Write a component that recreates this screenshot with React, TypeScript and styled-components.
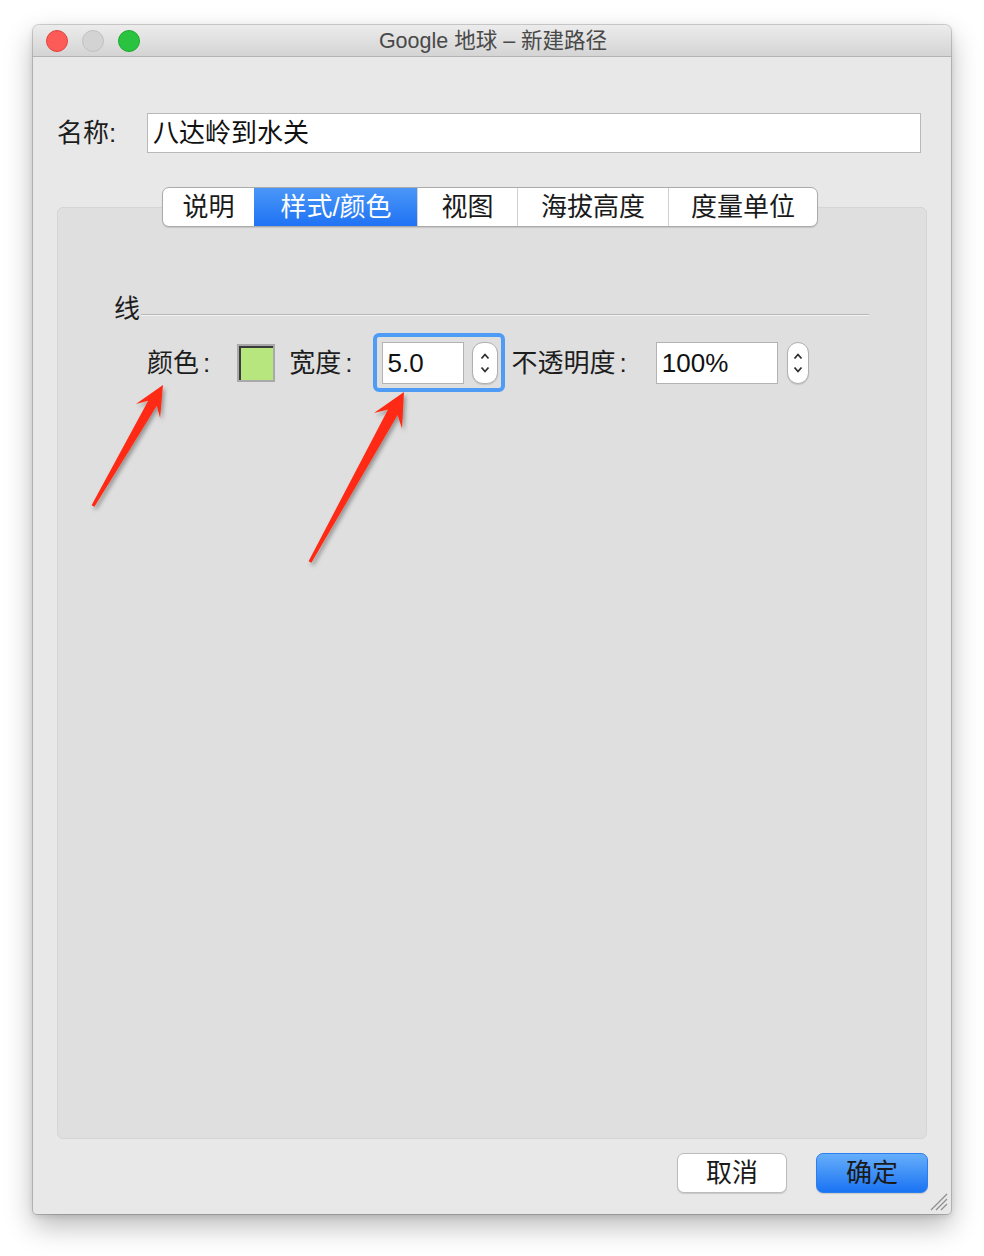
import React from "react";
import styled, { createGlobalStyle } from "styled-components";

const Global = createGlobalStyle`
  html, body { margin: 0; padding: 0; background: #ffffff; }
  body { font-family: "Liberation Sans", "Noto Sans CJK SC", sans-serif; color: #1d1d1d; }
  * { box-sizing: border-box; }
`;

const Page = styled.div`
  position: relative;
  width: 984px;
  height: 1256px;
  padding: 25px 0 0 33px;
`;

const Window = styled.div`
  position: relative;
  width: 918px;
  height: 1189px;
  display: flex;
  flex-direction: column;
  background: #e8e8e8;
  border-radius: 6px 6px 4px 4px;
  box-shadow: 0 0 0 1px rgba(0, 0, 0, 0.16), 0 12px 28px rgba(0, 0, 0, 0.28),
    0 2px 6px rgba(0, 0, 0, 0.12);
`;

const TitleBar = styled.div`
  height: 32px;
  flex: none;
  display: grid;
  grid-template-columns: 1fr auto 1fr;
  align-items: center;
  padding: 0 13px;
  background: linear-gradient(#ececec, #d4d4d4);
  border-bottom: 1px solid #b3b3b3;
  border-radius: 6px 6px 0 0;
`;

const Lights = styled.div`
  display: flex;
  gap: 14px;
  align-items: center;
`;

const Light = styled.span<{ $fill: string; $edge: string }>`
  width: 22px;
  height: 22px;
  border-radius: 50%;
  background: ${(p) => p.$fill};
  border: 1px solid ${(p) => p.$edge};
`;

const Title = styled.div`
  font-size: 21.5px;
  line-height: 26px;
  color: #494949;
  white-space: nowrap;
  margin-left: 2px;
`;

const Body = styled.div`
  flex: 1;
  display: flex;
  flex-direction: column;
  padding: 56px 24px 21px 24px;
`;

const NameRow = styled.div`
  display: flex;
  align-items: center;
  margin-right: 6px;
`;

const NameLabel = styled.div`
  width: 90px;
  font-size: 26px;
  line-height: 30px;
`;

const NameInput = styled.div`
  flex: 1;
  height: 40px;
  background: #ffffff;
  border: 1px solid #b9b9b9;
  display: flex;
  align-items: center;
  padding-left: 5px;
  font-size: 26px;
  line-height: 30px;
  color: #111;
`;

const TabsRow = styled.div`
  position: relative;
  z-index: 1;
  margin-top: 34px;
  height: 40px;
  display: flex;
  justify-content: center;
`;

const TabGroup = styled.div`
  display: flex;
  height: 40px;
  border: 1px solid #aaaaaa;
  border-radius: 7px;
  background: #ffffff;
  overflow: hidden;
  box-shadow: 0 1px 1px rgba(0, 0, 0, 0.12);
  margin-right: 4px;
`;

const Tab = styled.div<{ $w: number; $active?: boolean }>`
  width: ${(p) => p.$w}px;
  display: flex;
  align-items: center;
  justify-content: center;
  font-size: 26px;
  line-height: 30px;
  color: ${(p) => (p.$active ? "#ffffff" : "#1a1a1a")};
  background: ${(p) =>
    p.$active ? "linear-gradient(#4a97f8, #1f72f4)" : "transparent"};
  border-left: 1px solid ${(p) => (p.$active ? "transparent" : "#d2d2d2")};
  &:first-child {
    border-left: none;
  }
`;

const Panel = styled.div`
  position: relative;
  margin-top: -20px;
  height: 932px;
  flex: none;
  background: #dfdfdf;
  border: 1px solid #d5d5d5;
  border-radius: 6px;
  padding: 86px 57px 0 56px;
`;

const GroupHeader = styled.div`
  display: flex;
  align-items: flex-end;
  gap: 1px;
  height: 30px;
`;

const GroupTitle = styled.div`
  font-size: 26px;
  line-height: 30px;
`;

const GroupRule = styled.div`
  flex: 1;
  height: 2px;
  margin-bottom: 8px;
  border-top: 1px solid #b6b6b6;
  border-bottom: 1px solid #f4f4f4;
`;

const FieldRow = styled.div`
  display: flex;
  align-items: center;
  margin-top: 9px;
  padding-left: 33px;
  height: 59px;
`;

const Label = styled.div<{ $gap: number }>`
  font-size: 26px;
  line-height: 30px;
  margin-right: ${(p) => p.$gap}px;
  white-space: nowrap;
`;

const Colon = styled.span`
  margin-left: 4px;
`;

const Swatch = styled.div`
  width: 38px;
  height: 38px;
  border: 2px solid #a9a9a9;
  background: #b7e67f;
  margin-right: 14px;
`;

const SwatchInner = styled.div`
  width: 100%;
  height: 100%;
  border-top: 2px solid #3b3b3b;
  border-left: 2px solid #3b3b3b;
  background: #b7e67f;
`;

const FocusRing = styled.div`
  display: flex;
  align-items: center;
  gap: 8px;
  height: 59px;
  width: 132px;
  padding: 0 3px 0 5px;
  border: 4px solid #4f9cf7;
  border-radius: 6px;
  background: #dfdfdf;
  margin-right: 7px;
`;

const NumberBox = styled.div<{ $w: number }>`
  width: ${(p) => p.$w}px;
  height: 42px;
  background: #ffffff;
  border: 1px solid #b3b3b3;
  display: flex;
  align-items: center;
  padding-left: 5px;
  font-size: 26px;
  line-height: 30px;
  color: #111;
`;

const StepperBox = styled.div<{ $w: number }>`
  width: ${(p) => p.$w}px;
  height: 42px;
  background: #ffffff;
  border: 1px solid #b0b0b0;
  border-radius: 11px;
  box-shadow: 0 1px 1px rgba(0, 0, 0, 0.12);
  display: flex;
  flex-direction: column;
  align-items: center;
  justify-content: center;
  gap: 6px;
`;

const Spacer = styled.div<{ $w: number }>`
  width: ${(p) => p.$w}px;
  flex: none;
`;

const ButtonRow = styled.div`
  margin-top: 14px;
  display: flex;
  justify-content: flex-end;
  gap: 29px;
  margin-right: -1px;
`;

const Button = styled.div<{ $primary?: boolean; $w: number }>`
  width: ${(p) => p.$w}px;
  height: 40px;
  border-radius: 7px;
  display: flex;
  align-items: center;
  justify-content: center;
  font-size: 26px;
  line-height: 30px;
  color: #1a1a1a;
  background: ${(p) =>
    p.$primary ? "linear-gradient(#66aefb, #1a73f3)" : "#ffffff"};
  border: 1px solid ${(p) => (p.$primary ? "#2a7ef0" : "#bcbcbc")};
  box-shadow: 0 1px 1px rgba(0, 0, 0, 0.14);
`;

const Grip = styled.svg`
  position: absolute;
  right: 2px;
  bottom: 2px;
`;

const Overlay = styled.svg`
  position: absolute;
  left: 0;
  top: 0;
  pointer-events: none;
`;

function Stepper({ w }: { w: number }) {
  return (
    <StepperBox $w={w}>
      <svg width="12" height="8" viewBox="0 0 12 8">
        <polyline points="2.5,6.5 6,2.5 9.5,6.5" fill="none" stroke="#2e2e2e" strokeWidth="1.8" />
      </svg>
      <svg width="12" height="8" viewBox="0 0 12 8">
        <polyline points="2.5,1.5 6,5.5 9.5,1.5" fill="none" stroke="#2e2e2e" strokeWidth="1.8" />
      </svg>
    </StepperBox>
  );
}

type P = [number, number];

function arrowPoints(tail: P, tip: P, headLen: number, headHalf: number, shaftHalf: number, tailHalf: number) {
  const dx = tip[0] - tail[0];
  const dy = tip[1] - tail[1];
  const len = Math.hypot(dx, dy);
  const ux = dx / len;
  const uy = dy / len;
  const nx = -uy;
  const ny = ux;
  const at = (d: number, off: number): P => [
    tip[0] - ux * d + nx * off,
    tip[1] - uy * d + ny * off,
  ];
  const pts: P[] = [
    tip,
    at(headLen, headHalf),
    at(headLen * 0.7, shaftHalf),
    at(len, tailHalf),
    at(len, -tailHalf),
    at(headLen * 0.7, -shaftHalf),
    at(headLen, -headHalf),
  ];
  return pts.map((p) => `${p[0].toFixed(1)},${p[1].toFixed(1)}`).join(" ");
}

export default function App() {
  return (
    <>
      <Global />
      <Page>
        <Window>
          <TitleBar>
            <Lights>
              <Light $fill="#fc5b57" $edge="#e0443e" />
              <Light $fill="#d3d3d3" $edge="#c1c1c1" />
              <Light $fill="#2ac33f" $edge="#1fa72f" />
            </Lights>
            <Title>Google 地球 – 新建路径</Title>
            <div />
          </TitleBar>
          <Body>
            <NameRow>
              <NameLabel>名称:</NameLabel>
              <NameInput>八达岭到水关</NameInput>
            </NameRow>
            <TabsRow>
              <TabGroup>
                <Tab $w={91}>说明</Tab>
                <Tab $w={163} $active>样式/颜色</Tab>
                <Tab $w={100}>视图</Tab>
                <Tab $w={151}>海拔高度</Tab>
                <Tab $w={149}>度量单位</Tab>
              </TabGroup>
            </TabsRow>
            <Panel>
              <GroupHeader>
                <GroupTitle>线</GroupTitle>
                <GroupRule />
              </GroupHeader>
              <FieldRow>
                <Label $gap={27}>
                  颜色<Colon>:</Colon>
                </Label>
                <Swatch>
                  <SwatchInner />
                </Swatch>
                <Label $gap={20}>
                  宽度<Colon>:</Colon>
                </Label>
                <FocusRing>
                  <NumberBox $w={83}>5.0</NumberBox>
                  <Stepper w={26} />
                </FocusRing>
                <Label $gap={29}>
                  不透明度<Colon>:</Colon>
                </Label>
                <NumberBox $w={122}>100%</NumberBox>
                <Spacer $w={9} />
                <Stepper w={22} />
              </FieldRow>
            </Panel>
            <ButtonRow>
              <Button $w={110}>取消</Button>
              <Button $w={112} $primary>确定</Button>
            </ButtonRow>
          </Body>
          <Grip width="22" height="22" viewBox="0 0 22 22">
            <g stroke="#8f8f8f" strokeWidth="1.2">
              <line x1="4" y1="20" x2="20" y2="4" />
              <line x1="9" y1="20" x2="20" y2="9" />
              <line x1="14" y1="20" x2="20" y2="14" />
            </g>
          </Grip>
        </Window>
        <Overlay width="984" height="1256" viewBox="0 0 984 1256">
          <defs>
            <filter id="arrowShadow" x="-20%" y="-20%" width="140%" height="140%">
              <feDropShadow dx="2" dy="3" stdDeviation="2" floodColor="#000" floodOpacity="0.35" />
            </filter>
          </defs>
          <g fill="#ff2a12" filter="url(#arrowShadow)">
            <polygon points={arrowPoints([93, 506], [163, 385], 30, 14, 5, 1.6)} />
            <polygon points={arrowPoints([310, 562], [404, 392], 33, 16, 5.5, 1.6)} />
          </g>
        </Overlay>
      </Page>
    </>
  );
}
